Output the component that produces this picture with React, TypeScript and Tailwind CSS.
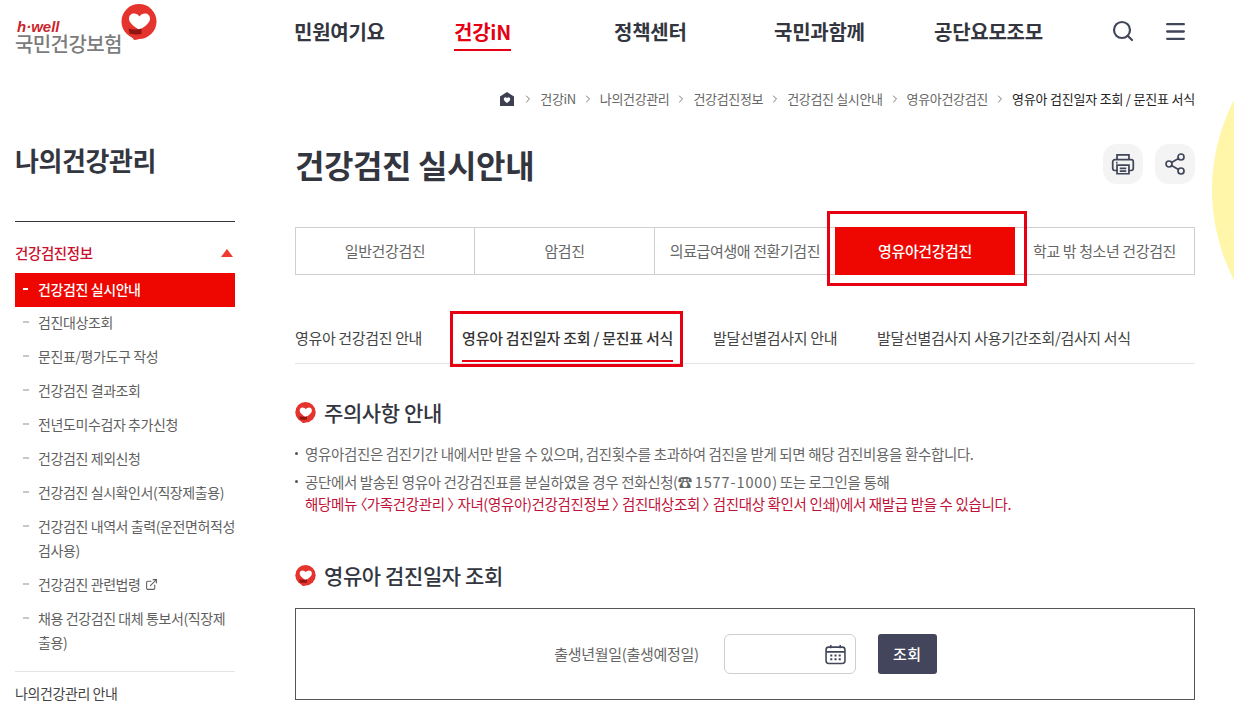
import { Search, Menu, Share2, ExternalLink, ChevronRight } from 'lucide-react'

const nav = [
  { label: '민원여기요' },
  { label: '건강iN', active: true },
  { label: '정책센터' },
  { label: '국민과함께' },
  { label: '공단요모조모' },
]

const crumbs = ['건강iN', '나의건강관리', '건강검진정보', '건강검진 실시안내', '영유아건강검진']

const sideItems = [
  '검진대상조회',
  '문진표/평가도구 작성',
  '건강검진 결과조회',
  '전년도미수검자 추가신청',
  '건강검진 제외신청',
  '건강검진 실시확인서(직장제출용)',
  '건강검진 내역서 출력(운전면허적성검사용)',
]

const tabs = ['일반건강검진', '암검진', '의료급여생애 전환기검진', '영유아건강검진', '학교 밖 청소년 건강검진']

function HeartBubble({ size }: { size: number }) {
  return (
    <svg width={size} height={size} viewBox="0 0 36 36" className="shrink-0">
      <circle cx="18" cy="17.500" r="17.500" fill="#e5332e" />
      <path d="M10 31l3 5c3 0 6-1 8-3z" fill="#e5332e" />
      <path d="M18.500 26C12 22 8 18.500 8 14.500 8 11.500 10.200 9.500 13 9.500c2.300 0 4.300 1.200 5.500 3 1.200-1.800 3.200-3 5.500-3 2.800 0 5 2 5 5 0 4-4 7.500-10.500 11.500z" fill="#fff" />
      <path d="M7.500 24.500c4 1.200 9 1.200 13 0V30c-4 .8-8 .6-12-.5z" fill="#8f1512" />
    </svg>
  )
}

function SectionTitle({ children }: { children: string }) {
  return (
    <div className="flex items-center gap-[8px]">
      <HeartBubble size={21} />
      <h3 className="text-[21px] leading-[28px] font-medium text-[#33363f]">{children}</h3>
    </div>
  )
}

export default function App() {
  return (
    <div className="relative h-[701px] w-[1234px] overflow-hidden bg-white font-['Noto_Sans_CJK_KR','Noto_Sans',sans-serif] tracking-[-0.4px] text-[#444]">
      <div className="absolute left-[1212px] top-[-5px] h-[390px] w-[390px] rounded-full bg-[#fff6a9]" />

      <header className="relative flex h-[64px]">
        <div className="relative w-[294px] pl-[15px] pt-[21px]">
          <div className="flex flex-col">
            <span className="pl-[2px] text-[15px] leading-[12px] font-bold italic tracking-normal text-[#c9252c] font-['Liberation_Sans',sans-serif]">h·well</span>
            <span className="text-[20px] leading-[22px] font-medium tracking-[-0.6px] text-[#7c7c7c]">국민건강보험</span>
          </div>
          <div className="absolute left-[121px] top-[4px]">
            <HeartBubble size={36} />
          </div>
        </div>
        <nav className="flex h-[64px]">
          {nav.map((n) => (
            <div key={n.label} className="flex w-[160px] justify-start pt-[18px]">
              <span className={`h-[33px] text-[20px] leading-[28px] font-bold tracking-[-0.25px] ${n.active ? 'border-b-2 border-[#e60012] text-[#e60012]' : 'text-[#33363f]'}`}>
                {n.label}
              </span>
            </div>
          ))}
        </nav>
        <div className="ml-[17px] flex gap-[28px] pt-[19px] text-[#42465a]">
          <Search size={24} strokeWidth={2.200} />
          <Menu size={25} strokeWidth={2.200} />
        </div>
      </header>

      <div className="relative flex pl-[15px]">
        <aside className="w-[220px] shrink-0 pt-[80px]">
          <h2 className="text-[26px] leading-[32px] font-bold text-[#33363f]">나의건강관리</h2>
          <div className="mt-[45px] border-t border-[#33363f]" />
          <div className="flex h-[51px] items-center justify-between pt-[10px] text-[14.500px] font-medium text-[#c8102e]">
            <span>건강검진정보</span>
            <span className="mr-[2px] h-0 w-0 border-x-[6px] border-b-[8px] border-x-transparent border-b-[#f03a2e]" />
          </div>
          <div className="flex h-[34px] items-center gap-[10px] bg-[#ee0600] pb-[2px] pl-[8px] text-[14px] font-medium text-white">
            <span className="h-[2px] w-[5px] bg-white" />
            건강검진 실시안내
          </div>
          {sideItems.map((s) => (
            <div key={s} className="flex gap-[9px] pb-[7px] pl-[8px] pt-[3px] text-[14px] leading-[24px] text-[#5f5f5f]">
              <span className="mt-[11px] h-[2px] w-[6px] shrink-0 bg-[#c8c8c8]" />
              <span>{s}</span>
            </div>
          ))}
          <div className="flex gap-[9px] pb-[7px] pl-[8px] pt-[3px] text-[14px] leading-[24px] text-[#5f5f5f]">
            <span className="mt-[11px] h-[2px] w-[6px] shrink-0 bg-[#c8c8c8]" />
            <span className="flex items-center gap-[4px]">
              건강검진 관련법령 <ExternalLink size={13} />
            </span>
          </div>
          <div className="flex gap-[9px] pb-[7px] pl-[8px] pt-[3px] text-[14px] leading-[24px] text-[#5f5f5f]">
            <span className="mt-[11px] h-[2px] w-[6px] shrink-0 bg-[#c8c8c8]" />
            <span>채용 건강검진 대체 통보서(직장제출용)</span>
          </div>
          <div className="mt-[10px] border-t border-[#e4e4e4] pt-[13px] text-[14px] leading-[16px] text-[#444]">나의건강관리 안내</div>
        </aside>

        <main className="ml-[60px] w-[900px] shrink-0">
          <div className="mt-[23px] flex h-[24px] items-center justify-end gap-[6px] text-[13px] tracking-[-0.35px] text-[#666]">
            <svg width="16" height="16" viewBox="0 0 16 16" className="mr-[1px]">
              <path d="M8 1l7 4.500V15H1V5.500z" fill="#3c4050" />
              <path d="M8 12c-2-1.400-3.200-2.500-3.200-4 0-1 .8-1.700 1.700-1.700.6 0 1.200.3 1.500.9.300-.6.900-.9 1.500-.9.900 0 1.700.7 1.700 1.700 0 1.500-1.200 2.600-3.200 4z" fill="#fff" />
            </svg>
            {crumbs.map((c) => (
              <span key={c} className="flex items-center gap-[6px]">
                <ChevronRight size={12} className="text-[#777]" />
                {c}
              </span>
            ))}
            <span className="flex items-center gap-[6px] tracking-[-0.2px] text-[#222]">
              <ChevronRight size={12} className="text-[#777]" />
              영유아 검진일자 조회 / 문진표 서식
            </span>
          </div>

          <div className="mt-[28px] flex h-[50px] items-center justify-between">
            <h1 className="text-[32px] leading-[44px] font-bold text-[#33363f]">건강검진 실시안내</h1>
            <div className="flex gap-[12px]">
              <span className="flex h-[40px] w-[40px] items-center justify-center rounded-[14px] bg-[#f4f4f4] text-[#42465a]">
                <svg width="26" height="26" viewBox="0 0 24 24" fill="none" stroke="currentColor" strokeWidth="1.600">
                  <path d="M6.500 8V3.500h11V8" />
                  <path d="M7 18H4.500A2 2 0 0 1 2.500 16v-6a2 2 0 0 1 2-2h15a2 2 0 0 1 2 2v6a2 2 0 0 1-2 2H17" />
                  <path d="M6.500 13h11v8h-11z" />
                  <path d="M9 16h6M9 18.500h6" />
                  <path d="M5.500 10.800h1.500" />
                </svg>
              </span>
              <span className="flex h-[40px] w-[40px] items-center justify-center rounded-[14px] bg-[#f4f4f4] text-[#42465a]">
                <Share2 size={24} strokeWidth={1.700} />
              </span>
            </div>
          </div>

          <div className="mt-[38px] grid h-[48px] grid-cols-[179px_180px_180px_180px_1fr] border border-[#cfcfcf]">
            {tabs.map((t, i) => (
              <div key={t} className={`relative flex items-center justify-center text-[15px] ${i === 3 ? 'my-[-1px] bg-[#ee0600] font-medium text-white' : 'text-[#666]'} ${i < 2 ? 'border-r border-[#cfcfcf]' : ''}`}>
                {t}
                {i === 3 && <div className="absolute bottom-[-11px] left-[-8px] right-[-12px] top-[-16px] border-[3px] border-[#e60012]" />}
              </div>
            ))}
          </div>

          <div className="mt-[36px] flex h-[53px] gap-[40px] border-b border-[#e4e4e4] text-[15px] tracking-[-0.35px] text-[#444]">
            <span className="pt-[16px]">영유아 건강검진 안내</span>
            <span className="relative h-[51px] border-b-2 border-[#e60012] pt-[16px] font-medium tracking-[-0.25px] text-[#333]">
              영유아 검진일자 조회 / 문진표 서식
              <span className="absolute bottom-[-7px] left-[-12px] right-[-10px] top-0 border-[3px] border-[#e60012]" />
            </span>
            <span className="pt-[16px]">발달선별검사지 안내</span>
            <span className="pt-[16px]">발달선별검사지 사용기간조회/검사지 서식</span>
          </div>

          <div className="mt-[34px]">
            <SectionTitle>주의사항 안내</SectionTitle>
          </div>
          <ul className="mt-[17px] text-[14.500px] leading-[22px] tracking-[-0.35px] text-[#666]">
            <li className="flex gap-[7px]">
              <span className="mt-[9px] h-[3px] w-[3px] shrink-0 rounded-full bg-[#555]" />
              영유아검진은 검진기간 내에서만 받을 수 있으며, 검진횟수를 초과하여 검진을 받게 되면 해당 검진비용을 환수합니다.
            </li>
            <li className="mt-[6px] flex gap-[7px]">
              <span className="mt-[9px] h-[3px] w-[3px] shrink-0 rounded-full bg-[#555]" />
              <span>
                공단에서 발송된 영유아 건강검진표를 분실하였을 경우 전화신청(☎ <span className="tracking-[0.9px]">1577-1000</span>) 또는 로그인을 통해
                <br />
                <span className="text-[#c01238] [font-feature-settings:'palt']">
                  해당메뉴 〈가족건강관리 〉 자녀(영유아)건강검진정보 〉 검진대상조회 〉 검진대상 확인서 인쇄)에서 재발급 받을 수 있습니다.
                </span>
              </span>
            </li>
          </ul>

          <div className="mt-[46px]">
            <SectionTitle>영유아 검진일자 조회</SectionTitle>
          </div>
          <div className="mt-[19px] flex h-[92px] items-center justify-center border border-[#555] pl-[1px]">
            <span className="text-[15px] tracking-[-0.3px] text-[#666]">출생년월일(출생예정일)</span>
            <div className="ml-[25px] flex h-[40px] w-[132px] items-center justify-end rounded-[6px] border border-[#cfcfcf] pr-[9px] text-[#42465a]">
              <svg width="21" height="21" viewBox="0 0 20 20" fill="none" stroke="currentColor" strokeWidth="1.500">
                <rect x="1" y="3" width="18" height="15.500" rx="2.500" />
                <path d="M1 7.500h18M5.500 1v3M14.500 1v3" />
                <path d="M5 11h2M9 11h2M13 11h2M5 14.500h2M9 14.500h2M13 14.500h2" strokeWidth="2" />
              </svg>
            </div>
            <button className="ml-[22px] h-[40px] w-[59px] rounded-[3px] bg-[#42455c] text-[15px] font-medium tracking-[0.5px] text-white">조회</button>
          </div>
        </main>
      </div>
    </div>
  )
}
